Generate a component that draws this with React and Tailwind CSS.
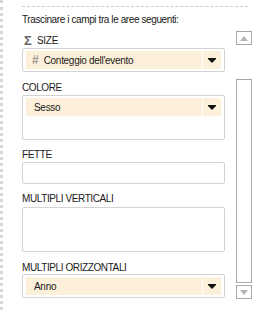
import React from 'react';

function Arrow() {
    return (
        <svg width="8" height="5" viewBox="0 0 8 5" className="block">
            <path d="M0 0H8V1L4 5L0 1Z" fill="#111" />
        </svg>
    );
}

function Field({ label, hash }) {
    return (
        <div className="flex h-[18px]">
            <div className="flex-1 bg-[#fdf0da] flex items-center pl-[6px] text-[10px] tracking-[-0.3px]">
                {hash && <span className="text-[#777] text-[12px] mr-[5px] tracking-normal">#</span>}
                <span className={hash ? '' : 'pl-[2px]'}>{label}</span>
            </div>
            <div className="w-[18px] ml-[1px] bg-[#fdf0da] flex items-center justify-center">
                <Arrow />
            </div>
        </div>
    );
}

function Box({ height, children }) {
    return (
        <div className={`border border-[#d3d3d3] rounded-[2px] px-[3px] py-[2px] ${height}`}>
            {children}
        </div>
    );
}

function Label({ children, className }) {
    return <div className={`text-[10px] leading-[13px] tracking-[-0.4px] ${className}`}>{children}</div>;
}

export default function App() {
    return (
        <div
            className="w-[255px] h-[310px] bg-white text-[#1a1a1a] border-l-[3px] border-dotted border-[#d8d8d8] pt-[6px] pl-[19px] overflow-hidden"
            style={{ fontFamily: '"Liberation Sans", Arial, sans-serif' }}
        >
            <div className="w-[226px] border-t border-dashed border-[#cccccc]" />
            <div className="mt-[6px] text-[10px] leading-[13px] tracking-[-0.4px]">Trascinare i campi tra le aree seguenti:</div>

            <div className="mt-[5px] flex">
                {/* fields */}
                <div className="w-[203px]">
                    <div className="mt-[3px] flex items-center h-[13px] text-[10px] tracking-[-0.3px]">
                        <span className="text-[#666] text-[13px] font-semibold leading-none w-[13px] ml-[2px]">Σ</span>
                        <span>SIZE</span>
                    </div>
                    <div className="mt-[1px]">
                        <Box height="h-[24px]">
                            <Field label="Conteggio dell'evento" hash />
                        </Box>
                    </div>

                    <Label className="mt-[9px]">COLORE</Label>
                    <div className="mt-[1px]">
                        <Box height="h-[45px]">
                            <Field label="Sesso" />
                        </Box>
                    </div>

                    <Label className="mt-[8px]">FETTE</Label>
                    <div className="mt-[1px]">
                        <Box height="h-[22px]" />
                    </div>

                    <Label className="mt-[8px]">MULTIPLI VERTICALI</Label>
                    <div className="mt-[2px]">
                        <Box height="h-[45px]" />
                    </div>

                    <Label className="mt-[9px]">MULTIPLI ORIZZONTALI</Label>
                    <Box height="h-[24px]">
                        <Field label="Anno" />
                    </Box>
                </div>

                {/* scrollbar */}
                <div className="ml-[11px] w-[16px] flex flex-col">
                    <div className="h-[14px] border border-[#a8a8a8] flex items-center justify-center">
                        <svg width="8" height="5" viewBox="0 0 8 5"><path d="M4 0L8 5H0Z" fill="#b4b4b4" /></svg>
                    </div>
                    <div className="mt-[34px] h-[204px] border border-[#a8a8a8]" />
                    <div className="mt-[2px] h-[14px] border border-[#a8a8a8] flex items-center justify-center">
                        <svg width="8" height="5" viewBox="0 0 8 5"><path d="M0 0H8L4 5Z" fill="#b4b4b4" /></svg>
                    </div>
                </div>
            </div>
        </div>
    );
}
